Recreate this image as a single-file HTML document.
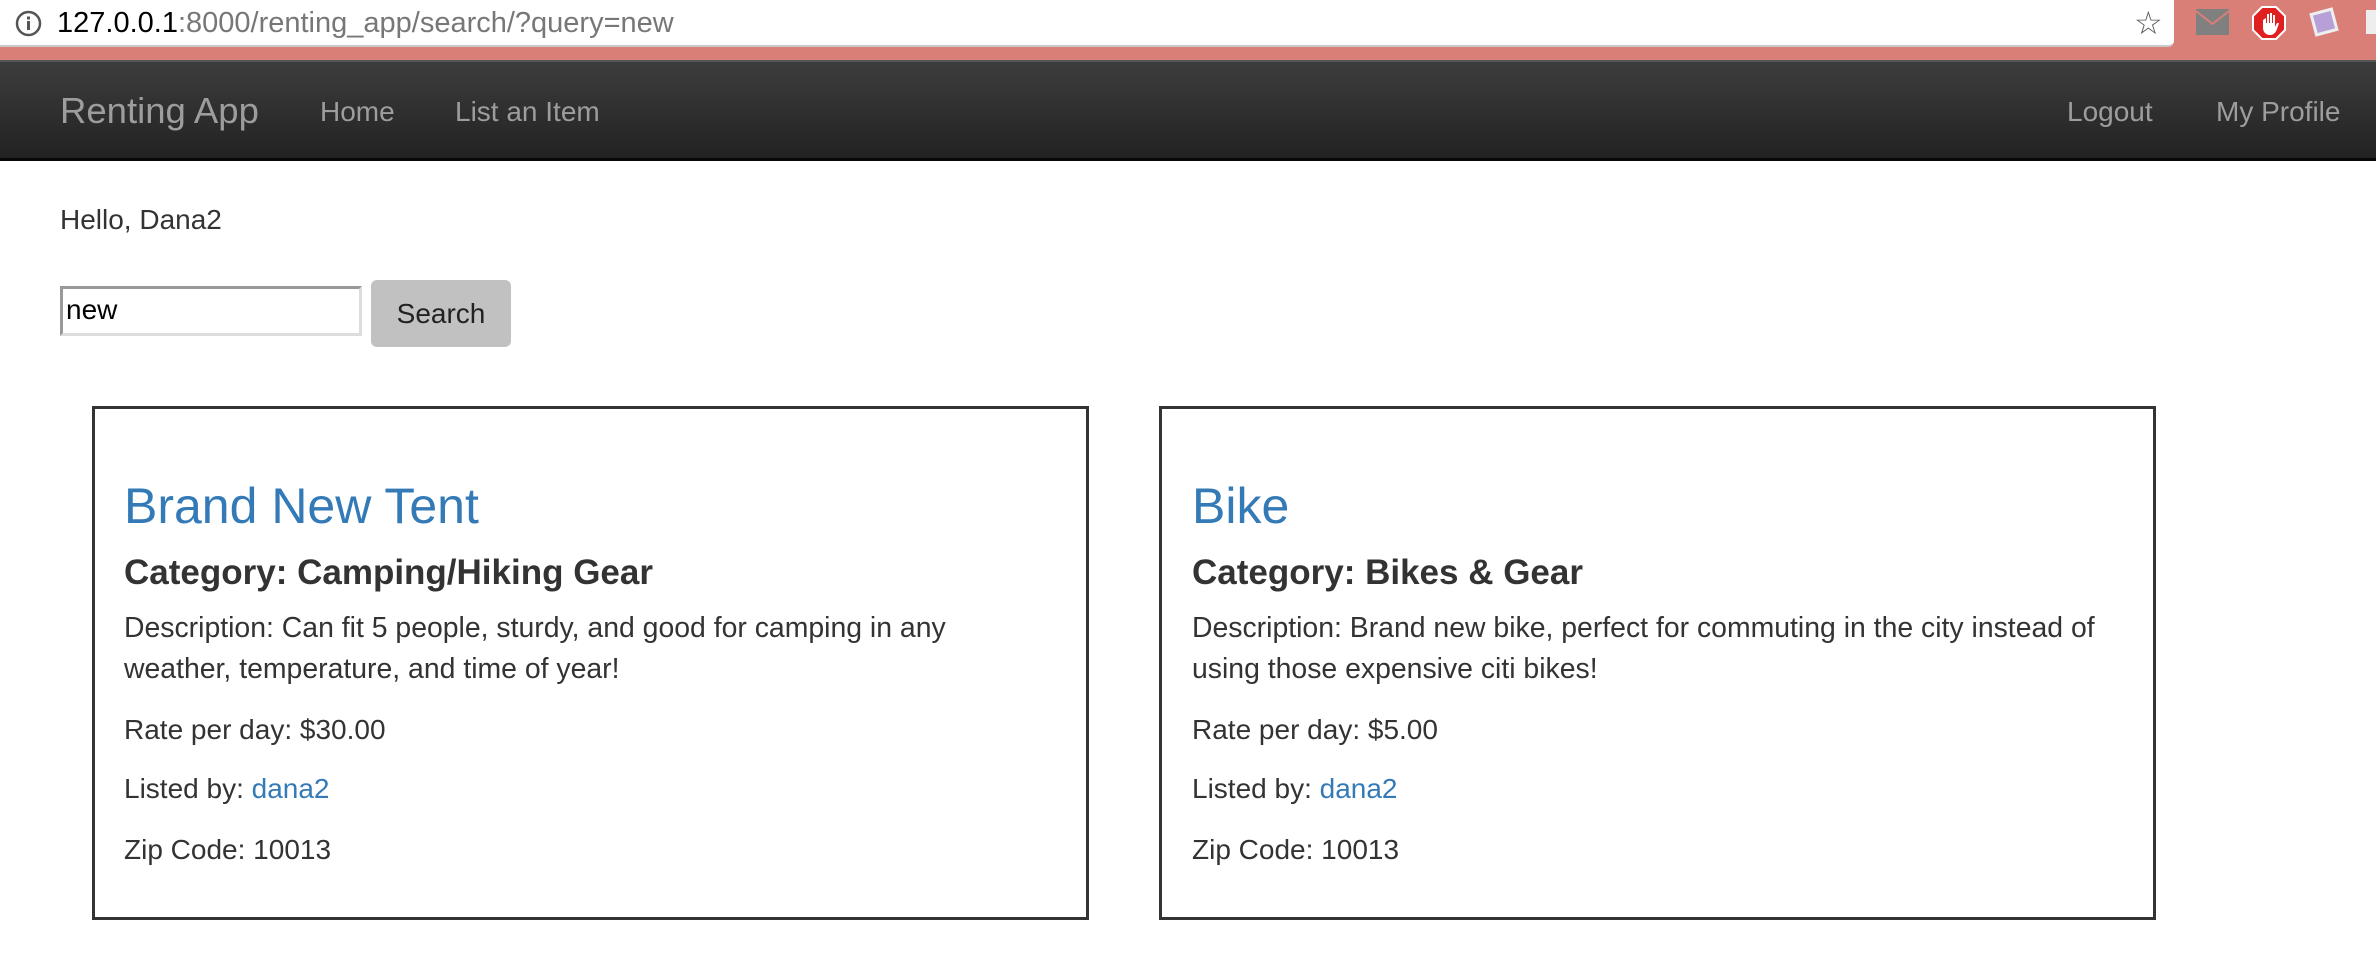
<!DOCTYPE html>
<html><head><meta charset="utf-8"><style>
*{margin:0;padding:0;box-sizing:border-box}
body{width:2376px;height:964px;overflow:hidden;background:#fff;font-family:"Liberation Sans",Helvetica,Arial,sans-serif;color:#333;position:relative}
.abs{position:absolute;white-space:nowrap}
.chrome{position:absolute;left:0;top:0;width:2376px;height:61px;background:#d97f78}
.urlbar{position:absolute;left:0;top:0;width:2174px;height:47px;background:#fff;border-bottom:2px solid #c9c9c9;border-bottom-right-radius:6px}
.nav{position:absolute;left:0;top:60px;width:2376px;height:101px;background:linear-gradient(#3d3d3d,#222);border-top:2px solid #555;border-bottom:3px solid #080808}
.navt{color:#9d9d9d;font-size:28px;line-height:40px;top:92px}
.t{font-size:28px;line-height:40px}
.d{font-size:28.4px;line-height:40px}
.card{position:absolute;top:406px;width:997px;height:514px;border:3px solid #333}
a{color:#337ab7;text-decoration:none}
</style></head><body>
<div class="chrome"></div>
<div class="urlbar"></div>
<svg class="abs" style="left:15px;top:10px" width="27" height="27" viewBox="0 0 27 27"><circle cx="13.5" cy="13.5" r="11.5" fill="none" stroke="#555" stroke-width="2.5"/><rect x="12" y="11" width="3" height="9" fill="#555"/><rect x="12" y="6.5" width="3" height="3" fill="#555"/></svg>
<div class="abs" style="left:57px;top:6px;font-size:29px;line-height:34px;color:#000">127.0.0.1<span style="color:#777">:8000/renting_app/search/?query=new</span></div>
<div class="abs" style="left:2134px;top:3px;font-size:32px;color:#555;line-height:40px">☆</div>
<div class="abs" style="left:2196px;top:9px;width:33px;height:26px;background:#808080"></div>
<svg class="abs" style="left:2196px;top:9px" width="33" height="26"><polyline points="0,2 16.5,15 33,2" fill="none" stroke="#d97f78" stroke-width="2"/></svg>
<svg class="abs" style="left:2252px;top:6px" width="34" height="34" viewBox="0 0 34 34"><polygon points="10,1 24,1 33,10 33,24 24,33 10,33 1,24 1,10" fill="#e02020" stroke="#fff" stroke-width="2"/><path d="M11 14v8c0 4 3 7 7 7s6-3 7-6l2-6h-2l-2 4V9h-2v8h-1V7h-2v10h-1V8h-2v9h-1v-5z" fill="#fff"/></svg>
<div class="abs" style="left:2312px;top:10px;width:24px;height:24px;background:#b7a0d8;border:3px solid #eee;transform:rotate(-15deg)"></div>
<div class="abs" style="left:2366px;top:10px;width:14px;height:24px;background:#eee"></div>

<div class="nav"></div>
<div class="abs" style="left:60px;top:88px;font-size:36.5px;line-height:46px;color:#9d9d9d">Renting App</div>
<div class="abs navt" style="left:320px">Home</div>
<div class="abs navt" style="left:455px">List an Item</div>
<div class="abs navt" style="left:2067px">Logout</div>
<div class="abs navt" style="left:2216px">My Profile</div>

<div class="abs t" style="left:60px;top:200px">Hello, Dana2</div>
<div class="abs" style="left:60px;top:286px;width:302px;height:50px;border:3px solid #999;border-right-color:#ddd;border-bottom-color:#ddd;font-size:28px;line-height:42px;padding-left:3px;color:#000">new</div>
<div class="abs" style="left:371px;top:280px;width:140px;height:67px;background:#c1c1c1;border-radius:6px;font-size:28px;line-height:67px;text-align:center;color:#222">Search</div>

<div class="card" style="left:92px"></div>
<div class="card" style="left:1159px"></div>

<div class="abs" style="left:124px;top:477px;font-size:50px;line-height:58px;color:#337ab7">Brand New Tent</div>
<div class="abs" style="left:124px;top:552px;font-size:35px;line-height:42px;font-weight:bold">Category: Camping/Hiking Gear</div>
<div class="abs d" style="left:124px;top:608px">Description: Can fit 5 people, sturdy, and good for camping in any</div>
<div class="abs d" style="left:124px;top:649px">weather, temperature, and time of year!</div>
<div class="abs t" style="left:124px;top:710px">Rate per day: $30.00</div>
<div class="abs t" style="left:124px;top:769px">Listed by: <a>dana2</a></div>
<div class="abs t" style="left:124px;top:830px">Zip Code: 10013</div>

<div class="abs" style="left:1192px;top:477px;font-size:50px;line-height:58px;color:#337ab7">Bike</div>
<div class="abs" style="left:1192px;top:552px;font-size:35px;line-height:42px;font-weight:bold">Category: Bikes &amp; Gear</div>
<div class="abs d" style="left:1192px;top:608px">Description: Brand new bike, perfect for commuting in the city instead of</div>
<div class="abs d" style="left:1192px;top:649px">using those expensive citi bikes!</div>
<div class="abs t" style="left:1192px;top:710px">Rate per day: $5.00</div>
<div class="abs t" style="left:1192px;top:769px">Listed by: <a>dana2</a></div>
<div class="abs t" style="left:1192px;top:830px">Zip Code: 10013</div>
</body></html>
